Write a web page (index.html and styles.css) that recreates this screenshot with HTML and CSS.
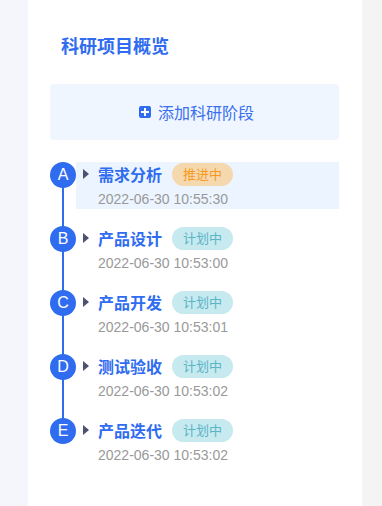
FILE: index.html
```html
<!DOCTYPE html>
<html lang="zh-CN">
<head>
    <meta charset="UTF-8">
    <meta name="viewport" content="width=device-width, initial-scale=1.0">
    <title>科研项目概览</title>
    <link rel="stylesheet" href="styles.css">
</head>
<body>
    <div class="side side-left"></div>
    <div class="card">
        <h2 class="title">科研项目概览</h2>
        <div class="add-box">
            <span class="add-icon"></span>
            <span class="add-text">添加科研阶段</span>
        </div>
        <ul class="timeline">
            <li class="item">
                <span class="dot">A</span>
                <div class="content active">
                    <div class="head">
                        <span class="arrow"></span>
                        <span class="name">需求分析</span>
                        <span class="tag tag-doing">推进中</span>
                    </div>
                    <div class="date">2022-06-30 10:55:30</div>
                </div>
            </li>
            <li class="item">
                <span class="dot">B</span>
                <div class="content">
                    <div class="head">
                        <span class="arrow"></span>
                        <span class="name">产品设计</span>
                        <span class="tag tag-plan">计划中</span>
                    </div>
                    <div class="date">2022-06-30 10:53:00</div>
                </div>
            </li>
            <li class="item">
                <span class="dot">C</span>
                <div class="content">
                    <div class="head">
                        <span class="arrow"></span>
                        <span class="name">产品开发</span>
                        <span class="tag tag-plan">计划中</span>
                    </div>
                    <div class="date">2022-06-30 10:53:01</div>
                </div>
            </li>
            <li class="item">
                <span class="dot">D</span>
                <div class="content">
                    <div class="head">
                        <span class="arrow"></span>
                        <span class="name">测试验收</span>
                        <span class="tag tag-plan">计划中</span>
                    </div>
                    <div class="date">2022-06-30 10:53:02</div>
                </div>
            </li>
            <li class="item">
                <span class="dot">E</span>
                <div class="content">
                    <div class="head">
                        <span class="arrow"></span>
                        <span class="name">产品迭代</span>
                        <span class="tag tag-plan">计划中</span>
                    </div>
                    <div class="date">2022-06-30 10:53:02</div>
                </div>
            </li>
        </ul>
    </div>
    <div class="side side-right"></div>
</body>
</html>
```

FILE: styles.css
```css
html,
body {
    height: 100%;
}

body {
    margin: 0;
    display: flex;
    font-family: "Liberation Sans", "Noto Sans CJK SC", sans-serif;
}

.side {
    flex: 1;
}

.side-left {
    flex: 0 0 28px;
    background-color: #f4f6fb;
}

.side-right {
    background-color: #f4f4f5;
}

.card {
    width: 334px;
    padding: 0 23px 0 22px;
    box-sizing: border-box;
    background-color: #fff;
}

.title {
    margin: 0;
    padding: 35px 0 0 11px;
    height: 49px;
    box-sizing: border-box;
    font-size: 18px;
    line-height: 24px;
    font-weight: bold;
    color: #2f6cf0;
}

.add-box {
    display: flex;
    align-items: center;
    justify-content: center;
    height: 56px;
    margin-top: 35px;
    padding-left: 4px;
    border-radius: 4px;
    background-color: #eff6ff;
    color: #3a6ff0;
    font-size: 16px;
}

.add-icon {
    position: relative;
    width: 12px;
    height: 12px;
    margin-right: 7px;
    border-radius: 2px;
    background-color: #2f6cf0;
}

.add-icon::before,
.add-icon::after {
    content: "";
    position: absolute;
    background-color: #fff;
}

.add-icon::before {
    left: 2px;
    top: 5px;
    width: 8px;
    height: 2px;
}

.add-icon::after {
    left: 5px;
    top: 2px;
    width: 2px;
    height: 8px;
}

.timeline {
    list-style: none;
    margin: 22px 0 0;
    padding: 0;
}

.item {
    position: relative;
    display: flex;
    margin-bottom: 17px;
}

.item::before {
    content: "";
    position: absolute;
    left: 12px;
    top: 13px;
    width: 2px;
    height: 64px;
    background-color: #2f6cf0;
}

.item:last-child::before {
    display: none;
}

.dot {
    position: relative;
    flex: 0 0 26px;
    height: 26px;
    border-radius: 50%;
    background-color: #2f6cf0;
    color: #fff;
    font-size: 16px;
    line-height: 26px;
    text-align: center;
}

.content {
    flex: 1;
    height: 47px;
    padding-left: 7px;
}

.content.active {
    background-color: #ecf5ff;
}

.head {
    display: flex;
    align-items: center;
    height: 24px;
}

.arrow {
    width: 0;
    height: 0;
    border-top: 5px solid transparent;
    border-bottom: 5px solid transparent;
    border-left: 6px solid #4b5270;
    margin-right: 9px;
}

.name {
    font-size: 16px;
    font-weight: bold;
    color: #2f6cf0;
    margin-right: 10px;
}

.tag {
    height: 23px;
    padding: 0 11px;
    border-radius: 12px;
    font-size: 13px;
    line-height: 23px;
}

.tag-doing {
    background-color: #f5d8ad;
    color: #f59a23;
}

.tag-plan {
    background-color: #c7e9f0;
    color: #5bb5c6;
}

.date {
    padding: 2px 0 0 15px;
    font-size: 14px;
    line-height: 22px;
    color: #999;
}
```
